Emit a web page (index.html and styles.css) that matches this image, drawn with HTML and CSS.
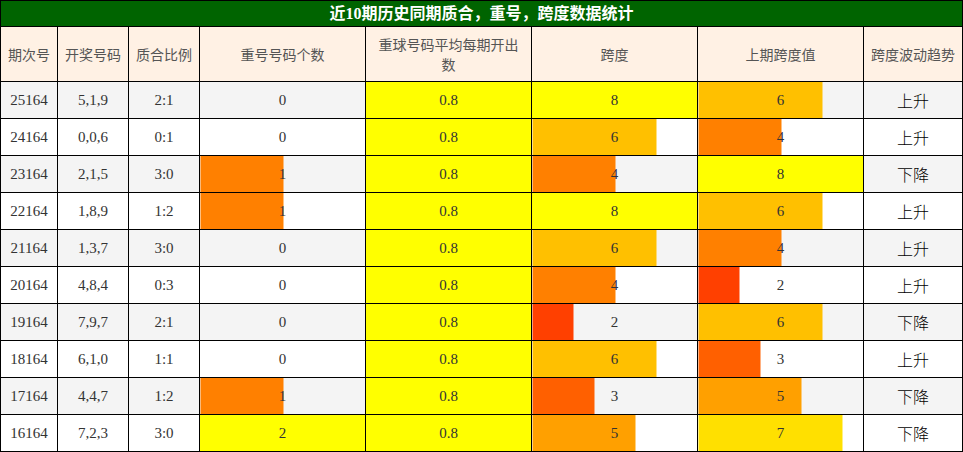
FILE: index.html
```html
<!DOCTYPE html>
<html lang="zh">
<head>
<meta charset="utf-8">
<title>近10期历史同期质合，重号，跨度数据统计</title>
<link rel="stylesheet" href="styles.css">
</head>
<body>
<table class="stats">
  <colgroup>
    <col class="c-issue"><col class="c-nums"><col class="c-ratio">
    <col class="c-wide"><col class="c-wide"><col class="c-wide"><col class="c-wide">
    <col class="c-trend">
  </colgroup>
  <thead>
    <tr><th class="title" colspan="8">近10期历史同期质合，重号，跨度数据统计</th></tr>
    <tr class="head">
      <th>期次号</th><th>开奖号码</th><th>质合比例</th><th>重号号码个数</th>
      <th>重球号码平均每期开出数</th><th>跨度</th><th>上期跨度值</th><th>跨度波动趋势</th>
    </tr>
  </thead>
  <tbody>
    <tr><td>25164</td><td>5,1,9</td><td>2:1</td><td>0</td><td class="bar" style="--w:100%;--c:#ffff00">0.8</td><td class="bar" style="--w:100%;--c:#ffff00">8</td><td class="bar" style="--w:75%;--c:#ffc000">6</td><td class="trend">上升</td></tr>
    <tr><td>24164</td><td>0,0,6</td><td>0:1</td><td>0</td><td class="bar" style="--w:100%;--c:#ffff00">0.8</td><td class="bar" style="--w:75%;--c:#ffc000">6</td><td class="bar" style="--w:50%;--c:#ff8000">4</td><td class="trend">上升</td></tr>
    <tr><td>23164</td><td>2,1,5</td><td>3:0</td><td class="bar" style="--w:50%;--c:#ff8000">1</td><td class="bar" style="--w:100%;--c:#ffff00">0.8</td><td class="bar" style="--w:50%;--c:#ff8000">4</td><td class="bar" style="--w:100%;--c:#ffff00">8</td><td class="trend">下降</td></tr>
    <tr><td>22164</td><td>1,8,9</td><td>1:2</td><td class="bar" style="--w:50%;--c:#ff8000">1</td><td class="bar" style="--w:100%;--c:#ffff00">0.8</td><td class="bar" style="--w:100%;--c:#ffff00">8</td><td class="bar" style="--w:75%;--c:#ffc000">6</td><td class="trend">上升</td></tr>
    <tr><td>21164</td><td>1,3,7</td><td>3:0</td><td>0</td><td class="bar" style="--w:100%;--c:#ffff00">0.8</td><td class="bar" style="--w:75%;--c:#ffc000">6</td><td class="bar" style="--w:50%;--c:#ff8000">4</td><td class="trend">上升</td></tr>
    <tr><td>20164</td><td>4,8,4</td><td>0:3</td><td>0</td><td class="bar" style="--w:100%;--c:#ffff00">0.8</td><td class="bar" style="--w:50%;--c:#ff8000">4</td><td class="bar" style="--w:25%;--c:#ff4000">2</td><td class="trend">上升</td></tr>
    <tr><td>19164</td><td>7,9,7</td><td>2:1</td><td>0</td><td class="bar" style="--w:100%;--c:#ffff00">0.8</td><td class="bar" style="--w:25%;--c:#ff4000">2</td><td class="bar" style="--w:75%;--c:#ffc000">6</td><td class="trend">下降</td></tr>
    <tr><td>18164</td><td>6,1,0</td><td>1:1</td><td>0</td><td class="bar" style="--w:100%;--c:#ffff00">0.8</td><td class="bar" style="--w:75%;--c:#ffc000">6</td><td class="bar" style="--w:37.5%;--c:#ff6000">3</td><td class="trend">上升</td></tr>
    <tr><td>17164</td><td>4,4,7</td><td>1:2</td><td class="bar" style="--w:50%;--c:#ff8000">1</td><td class="bar" style="--w:100%;--c:#ffff00">0.8</td><td class="bar" style="--w:37.5%;--c:#ff6000">3</td><td class="bar" style="--w:62.5%;--c:#ffa000">5</td><td class="trend">下降</td></tr>
    <tr><td>16164</td><td>7,2,3</td><td>3:0</td><td class="bar" style="--w:100%;--c:#ffff00">2</td><td class="bar" style="--w:100%;--c:#ffff00">0.8</td><td class="bar" style="--w:62.5%;--c:#ffa000">5</td><td class="bar" style="--w:87.5%;--c:#ffe000">7</td><td class="trend">下降</td></tr>
  </tbody>
</table>
</body>
</html>
```
FILE: styles.css
```css
html, body {
  margin: 0;
  padding: 0;
  background: #ffffff;
}

.stats {
  border-collapse: collapse;
  table-layout: fixed;
  width: 962px;
  font-family: "Liberation Serif", "Noto Sans CJK SC", serif;
  font-size: 15px;
  color: #333333;
}

.c-issue { width: 57px; }
.c-nums { width: 71px; }
.c-ratio { width: 71px; }
.c-wide { width: 166px; }
.c-trend { width: 99px; }

.stats th,
.stats td {
  border: 1px solid #000000;
  text-align: center;
  padding: 0 8px;
}

.title {
  background: #006400;
  color: #ffffff;
  font-family: "Liberation Serif", "Noto Sans CJK SC", serif;
  font-weight: bold;
  font-size: 16px;
  height: 25px;
  line-height: 20px;
}

.head th {
  background: #fff1e4;
  color: #555555;
  font-family: "Noto Sans CJK SC", sans-serif;
  font-weight: normal;
  font-size: 14px;
  line-height: 20px;
  height: 54px;
  padding: 0 6px;
}

.stats tbody td {
  height: 36px;
  line-height: 20px;
}

.stats tbody tr:nth-child(odd) {
  background: #f4f4f4;
}

.stats tbody tr:nth-child(even) {
  background: #ffffff;
}

.bar {
  background-image: linear-gradient(to right, var(--c) 0, var(--c) var(--w), transparent var(--w));
}

.trend {
  font-family: "Noto Sans CJK SC", sans-serif;
  font-size: 16px;
  font-weight: 300;
  color: #000000;
}
```
